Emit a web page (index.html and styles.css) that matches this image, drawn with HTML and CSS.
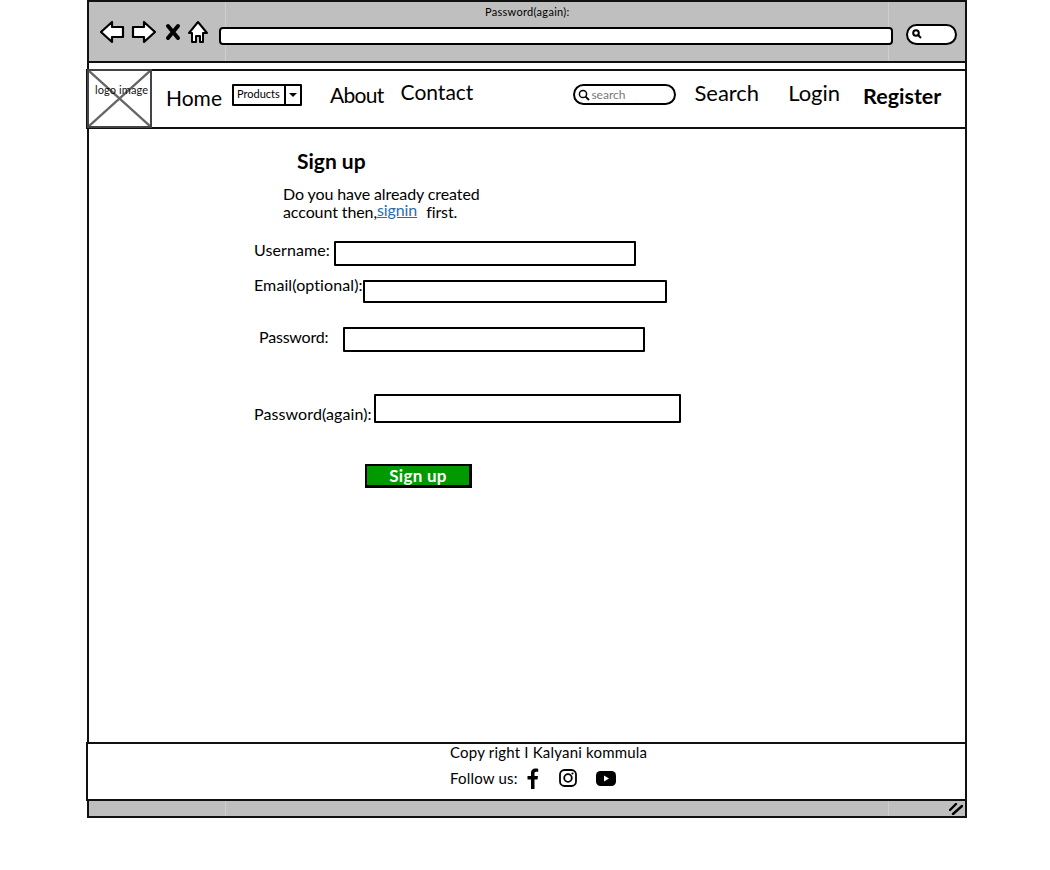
FILE: index.html
```html
<!DOCTYPE html>
<html lang="en">
<head>
    <meta charset="UTF-8">
    <meta name="viewport" content="width=device-width, initial-scale=1.0">
    <title>Sign up wireframe</title>
    <link rel="stylesheet" href="styles.css">
</head>
<body>
    <div class="window">
        <div class="toolbar">
            <div class="caption">Password(again):</div>
            <div class="browser-row">
                <svg class="browser-icons" width="110" height="26" viewBox="0 0 110 26">
                    <path d="M2 12 L13 2 L13 7 L24 7 L24 17 L13 17 L13 22 Z" fill="#fff" stroke="#000" stroke-width="2.2" stroke-linejoin="round"/>
                    <path d="M56 12 L45 2 L45 7 L34 7 L34 17 L45 17 L45 22 Z" fill="#fff" stroke="#000" stroke-width="2.2" stroke-linejoin="round"/>
                    <path d="M69 6 L79 18 M79 6 L69 18" stroke="#000" stroke-width="4" stroke-linecap="round"/>
                    <path d="M99 2 L108 13 L104 13 L104 22 L101 22 L101 16 L97 16 L97 22 L93 22 L93 13 L90 13 Z" fill="#fff" stroke="#000" stroke-width="2" stroke-linejoin="round"/>
                </svg>
                <div class="address-bar"></div>
                <div class="browser-search">
                    <svg width="10" height="10" viewBox="0 0 10 10"><circle cx="4" cy="4" r="2.8" fill="none" stroke="#000" stroke-width="2"/><path d="M6 6 L9 9" stroke="#000" stroke-width="2"/></svg>
                </div>
            </div>
        </div>

        <nav class="navbar">
            <div class="logo">
                <svg width="62" height="56" viewBox="0 0 62 56"><path d="M0 0 L62 56 M62 0 L0 56" stroke="#666" stroke-width="2.4"/></svg>
                <span class="logo-text">logo image</span>
            </div>
            <a class="nav-link nav-home">Home</a>
            <div class="products">
                <span class="products-label">Products</span>
                <span class="products-arrow"></span>
            </div>
            <a class="nav-link nav-about">About</a>
            <a class="nav-link nav-contact">Contact</a>
            <div class="nav-search">
                <svg width="12" height="12" viewBox="0 0 12 12"><circle cx="5" cy="5" r="3.6" fill="none" stroke="#000" stroke-width="1.5"/><path d="M7.6 7.6 L11 11" stroke="#000" stroke-width="1.8"/></svg>
                <span>search</span>
            </div>
            <a class="nav-link nav-search-link">Search</a>
            <a class="nav-link nav-login">Login</a>
            <a class="nav-link nav-register">Register</a>
        </nav>

        <main class="content">
            <h1 class="title">Sign up</h1>
            <p class="intro">Do you have already created<br>account then,<a class="signin">signin</a><span class="first">first.</span></p>
            <form class="signup-form">
                <div class="row row-username">
                    <label>Username:</label>
                    <input type="text">
                </div>
                <div class="row row-email">
                    <label>Email(optional):</label>
                    <input type="text">
                </div>
                <div class="row row-password">
                    <label>Password:</label>
                    <input type="password">
                </div>
                <div class="row row-again">
                    <label>Password(again):</label>
                    <input type="password">
                </div>
                <button class="submit" type="button">Sign up</button>
            </form>
        </main>

        <footer class="footer">
            <div class="copyright">Copy right I Kalyani kommula</div>
            <div class="follow">
                <span>Follow us:</span>
                <svg class="fb" width="12" height="21" viewBox="0 0 12 21"><path d="M4 21 V11.500 H0.500 V8 H4 V5 C4 2 5.800 0.500 8.300 0.500 C9.600 0.500 10.700 0.600 11.200 0.700 V3.800 H9.300 C7.900 3.800 7.500 4.500 7.500 5.500 V8 H11 L10.500 11.500 H7.500 V21 Z" fill="#000"/></svg>
                <svg class="ig" width="18" height="18" viewBox="0 0 18 18"><rect x="1" y="1" width="16" height="16" rx="4.500" fill="none" stroke="#000" stroke-width="1.800"/><circle cx="9" cy="9" r="3.800" fill="none" stroke="#000" stroke-width="1.800"/><circle cx="13.500" cy="4.500" r="1.100" fill="#000"/></svg>
                <svg class="yt" width="20" height="15" viewBox="0 0 20 15"><rect x="0" y="0" width="20" height="15" rx="4.500" fill="#000"/><path d="M8 4.500 L13 7.500 L8 10.500 Z" fill="#fff"/></svg>
            </div>
        </footer>

        <div class="statusbar">
            <svg width="14" height="12" viewBox="0 0 14 12"><path d="M1 7 L7 1 M4 11 L13 3" stroke="#000" stroke-width="2.400" stroke-linecap="round"/></svg>
        </div>
    </div>
</body>
</html>
```

FILE: styles.css
```css
body {
    margin: 0;
    background: #fff;
    color: #000;
    font-family: 'Lato', sans-serif;
}
.window {
    box-sizing: border-box;
    width: 880px;
    height: 818px;
    margin-left: 87px;
    border: 2px solid #111;
    display: flex;
    flex-direction: column;
}

/* browser chrome */
.toolbar {
    box-sizing: border-box;
    height: 61px;
    background-color: #bfbfbf;
    background-image: linear-gradient(#cfcfcf, #cfcfcf), linear-gradient(#cfcfcf, #cfcfcf);
    background-size: 1px 100%;
    background-position: 136px 0, 799px 0;
    background-repeat: no-repeat;
    border-bottom: 2px solid #111;
}
.caption {
    font-size: 11px;
    letter-spacing: 0.3px;
    line-height: 13px;
    margin-top: 3px;
    padding-left: 396px;
}
.browser-row {
    display: flex;
    align-items: center;
    margin-top: -1px;
    height: 32px;
    padding-left: 10px;
}
.browser-icons {
    flex: none;
    margin-right: 10px;
}
.address-bar {
    box-sizing: border-box;
    width: 674px;
    height: 18px;
    background: #fff;
    border: 2px solid #000;
    border-radius: 4px;
    margin-top: 5px;
}
.browser-search {
    box-sizing: border-box;
    width: 51px;
    height: 21px;
    margin: 2px 0 0 13px;
    padding: 3px 0 0 4px;
    background: #fff;
    border: 2px solid #000;
    border-radius: 11px;
}
.browser-search svg {
    display: block;
}

/* navbar */
.navbar {
    box-sizing: border-box;
    display: flex;
    align-items: flex-start;
    height: 60px;
    margin: 6px -1px 0 -3px;
    border: 2px solid #111;
    border-right-width: 1px;
    background: #fff;
}
.logo {
    position: relative;
    box-sizing: border-box;
    flex: none;
    width: 65px;
    height: 59px;
    margin: -2px 0 0 -1px;
    border: 2px solid #444;
}
.logo svg {
    display: block;
    width: 100%;
    height: 100%;
}
.logo-text {
    position: absolute;
    left: 6px;
    top: 12px;
    font-size: 11px;
    letter-spacing: 0.1px;
    white-space: nowrap;
    color: #111;
}
.nav-link {
    font-size: 22px;
    line-height: 26px;
    white-space: nowrap;
}
.nav-home { margin: 14px 0 0 14px; font-size: 21px; }
.nav-about { margin: 11px 0 0 28px; font-size: 21px; letter-spacing: -0.7px; }
.nav-contact { margin: 8px 0 0 17px; font-size: 21px; }
.nav-search-link { margin: 9px 0 0 18px; }
.nav-login { margin: 9px 0 0 29px; }
.nav-register { margin: 12px 0 0 23px; font-size: 21.5px; font-weight: 700; }
.products {
    box-sizing: border-box;
    display: flex;
    flex: none;
    width: 70px;
    height: 22px;
    margin: 13px 0 0 10px;
    border: 2px solid #000;
    border-radius: 1px;
}
.products-label {
    flex: 1;
    font-size: 11px;
    line-height: 16px;
    padding-left: 3px;
    border-right: 2px solid #000;
}
.products-arrow {
    width: 14px;
    position: relative;
}
.products-arrow::after {
    content: '';
    position: absolute;
    left: 3px;
    top: 7px;
    border-left: 4px solid transparent;
    border-right: 4px solid transparent;
    border-top: 4px solid #000;
}
.nav-search {
    box-sizing: border-box;
    display: flex;
    align-items: center;
    gap: 1px;
    flex: none;
    width: 103px;
    height: 21px;
    margin: 13px 0 0 100px;
    padding-left: 3px;
    border: 2px solid #000;
    border-radius: 11px;
    font-size: 12px;
    color: #777;
}

/* sign up form */
.content {
    flex: 1;
    padding-left: 165px;
}
.title {
    margin: 20px 0 0 43px;
    font-size: 21px;
    line-height: 24px;
    font-weight: 700;
}
.intro {
    margin: 12px 0 0 29px;
    font-size: 16px;
    letter-spacing: -0.1px;
    line-height: 18px;
}
.signin {
    position: relative;
    top: -2px;
    color: #2a6cab;
    text-decoration: underline;
}
.first {
    margin-left: 9px;
}
.signup-form {
    display: flex;
    flex-direction: column;
    align-items: flex-start;
}
.row {
    display: flex;
}
.row label {
    font-size: 16px;
    letter-spacing: 0.1px;
    line-height: 18px;
    white-space: nowrap;
}
.row input {
    box-sizing: border-box;
    display: block;
    padding: 0;
    background: #fff;
    border: 2px solid #000;
    border-radius: 1px;
    outline: none;
}
.row-username { margin-top: 20px; }
.row-username label { width: 80px; }
.row-username input { width: 302px; height: 25px; }
.row-email { margin-top: 14px; }
.row-email label { width: 109px; margin-top: -4px; }
.row-email input { width: 304px; height: 23px; }
.row-password { margin-top: 24px; }
.row-password label { width: 84px; margin: 1px 0 0 5px; letter-spacing: -0.2px; }
.row-password input { width: 302px; height: 25px; }
.row-again { margin-top: 42px; }
.row-again label { width: 120px; margin-top: 11px; }
.row-again input { width: 307px; height: 29px; }
.submit {
    box-sizing: border-box;
    width: 107px;
    height: 24px;
    margin: 41px 0 0 111px;
    padding: 0;
    background: #009a00;
    color: #fff;
    border: 2px solid #000;
    border-width: 2px 3px 3px 2px;
    font-family: inherit;
    font-size: 17px;
    letter-spacing: 0.3px;
    font-weight: 700;
    line-height: 17px;
}

/* footer */
.footer {
    box-sizing: border-box;
    height: 59px;
    margin: 0 -1px 0 -3px;
    padding-left: 362px;
    border: 2px solid #111;
    border-right-width: 1px;
    background: #fff;
    font-size: 15px;
    letter-spacing: 0.2px;
}
.copyright {
    line-height: 16px;
}
.follow {
    display: flex;
    align-items: center;
    margin-top: 6px;
    height: 24px;
}
.fb { margin-left: 9px; }
.ig { margin-left: 20px; }
.yt { margin-left: 19px; }

.statusbar {
    box-sizing: border-box;
    display: flex;
    justify-content: flex-end;
    align-items: center;
    flex: none;
    height: 15px;
    padding-right: 2px;
    background-color: #bfbfbf;
    background-image: linear-gradient(#cfcfcf, #cfcfcf), linear-gradient(#cfcfcf, #cfcfcf);
    background-size: 1px 100%;
    background-position: 136px 0, 799px 0;
    background-repeat: no-repeat;
}
```
